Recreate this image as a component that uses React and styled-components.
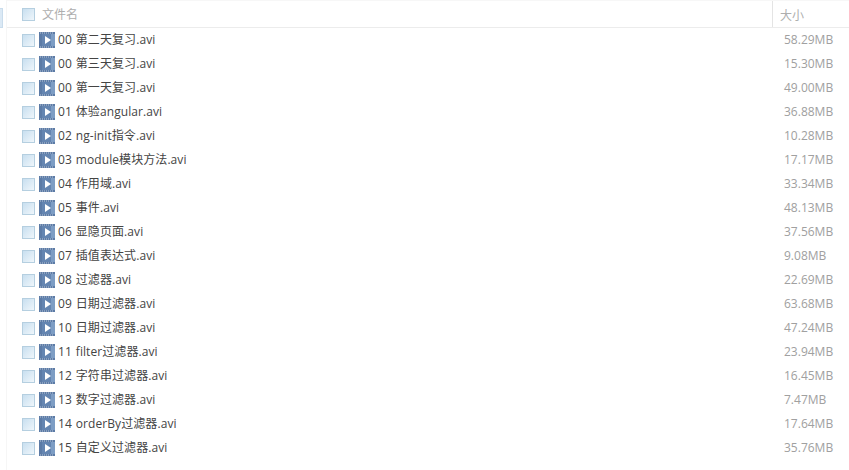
import React from 'react';
import styled, { createGlobalStyle } from 'styled-components';

const files = [
  ['00 第二天复习.avi', '58.29MB'],
  ['00 第三天复习.avi', '15.30MB'],
  ['00 第一天复习.avi', '49.00MB'],
  ['01 体验angular.avi', '36.88MB'],
  ['02 ng-init指令.avi', '10.28MB'],
  ['03 module模块方法.avi', '17.17MB'],
  ['04 作用域.avi', '33.34MB'],
  ['05 事件.avi', '48.13MB'],
  ['06 显隐页面.avi', '37.56MB'],
  ['07 插值表达式.avi', '9.08MB'],
  ['08 过滤器.avi', '22.69MB'],
  ['09 日期过滤器.avi', '63.68MB'],
  ['10 日期过滤器.avi', '47.24MB'],
  ['11 filter过滤器.avi', '23.94MB'],
  ['12 字符串过滤器.avi', '16.45MB'],
  ['13 数字过滤器.avi', '7.47MB'],
  ['14 orderBy过滤器.avi', '17.64MB'],
  ['15 自定义过滤器.avi', '35.76MB'],
];

const GlobalStyle = createGlobalStyle`
  html, body {
    margin: 0;
    padding: 0;
    background: #fff;
  }
  body {
    font-family: "Open Sans", "Noto Sans CJK SC", sans-serif;
  }
`;

const Page = styled.div`
  width: 849px;
  height: 470px;
  overflow: hidden;
  background: #fff;
  padding-left: 6px;
  box-sizing: border-box;
  position: relative;
`;

const SideTab = styled.div`
  position: absolute;
  left: 0;
  top: 8px;
  width: 2px;
  height: 18px;
  background: #dbe9f5;
  border: 1px solid #c9dcec;
  border-left: 0;
`;

const Panel = styled.div`
  height: 100%;
  border-left: 1px solid #f6f6f6;
`;

const HeaderRow = styled.div`
  display: flex;
  align-items: center;
  height: 28px;
  box-sizing: border-box;
  border-top: 1px solid #f7f7f7;
  border-bottom: 1px solid #ececec;
`;

const NameHeader = styled.div`
  flex: 1;
  display: flex;
  align-items: center;
  padding-left: 15px;
  color: #aeaeae;
  font-size: 12px;
`;

const SizeHeader = styled.div`
  width: 77px;
  height: 100%;
  box-sizing: border-box;
  display: flex;
  align-items: center;
  padding: 1px 0 0 7px;
  border-left: 1px solid #e4e4e4;
  color: #aeaeae;
  font-size: 12px;
`;

const Check = styled.span`
  width: 11px;
  height: 11px;
  flex: none;
  border: 1px solid #b5cfe0;
  background: linear-gradient(135deg, #c8dff0 0%, #eff6fb 100%);
  margin-right: ${(props) => props.$gap}px;
`;

const Row = styled.div`
  display: flex;
  align-items: center;
  height: 24px;
  padding-left: 15px;
`;

const Name = styled.div`
  flex: 1;
  margin-left: 3px;
  color: #444;
  font-size: 12px;
  line-height: 24px;
  letter-spacing: 0.08px;
  word-spacing: 0.7px;
  white-space: nowrap;
`;

const Size = styled.div`
  width: 65px;
  color: #a0a0a0;
  font-size: 12px;
  line-height: 24px;
`;

const holes = [1, 3, 5, 7, 9, 11, 13];

const VideoIcon = () => (
  <svg width="16" height="16" viewBox="0 0 16 16" style={{ flex: 'none' }}>
    <rect width="16" height="16" fill="#5c7ba6" />
    <rect x="3" y="2" width="10" height="12" fill="#6485b1" />
    <rect x="12" y="2" width="4" height="12" fill="#7d9dc4" />
    {holes.map((x) => (
      <React.Fragment key={x}>
        <rect x={x} y="0.5" width="1" height="1" fill="#bccada" />
        <rect x={x} y="14.5" width="1" height="1" fill="#bccada" />
      </React.Fragment>
    ))}
    <path d="M6 4 L12 8 L6 12 Z" fill="#fff" />
  </svg>
);

export default function App() {
  return (
    <Page>
      <GlobalStyle />
      <SideTab />
      <Panel>
        <HeaderRow>
          <NameHeader>
            <Check $gap={7} />
            文件名
          </NameHeader>
          <SizeHeader>大小</SizeHeader>
        </HeaderRow>
        {files.map(([name, size]) => (
          <Row key={name}>
            <Check $gap={4} />
            <VideoIcon />
            <Name>{name}</Name>
            <Size>{size}</Size>
          </Row>
        ))}
      </Panel>
    </Page>
  );
}
